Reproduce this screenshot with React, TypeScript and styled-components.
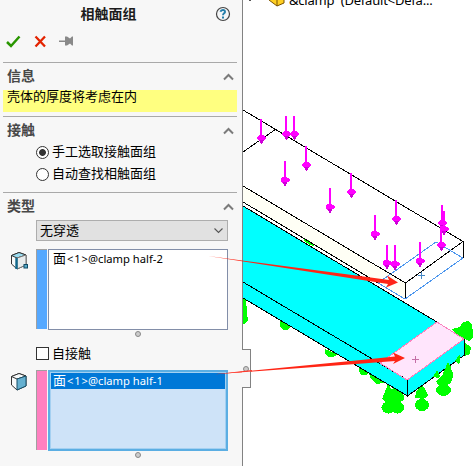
import React from 'react';
import styled, { createGlobalStyle, css } from 'styled-components';

const Global = createGlobalStyle`
  * { box-sizing: border-box; }
  body { margin: 0; background: #fff; overflow: hidden; font: 13px/18px "Noto Sans CJK SC", sans-serif; color: #000; }
`;

const Workspace = styled.div`
  display: flex;
  width: 476px;
  height: 466px;
  position: relative;
  overflow: hidden;
`;
const Panel = styled.aside`
  width: 243px;
  flex: none;
  background: #f7f7f7;
  border-right: 1px solid #828282;
  display: flex;
  flex-direction: column;
`;
const TitleBar = styled.header`
  height: 28px;
  display: grid;
  grid-template-columns: 204px 38px;
  align-items: center;
  justify-items: center;
`;
const Title = styled.h1`
  margin: -2px 0 0 13px;
  font-size: 14px;
  line-height: 20px;
  font-weight: 700;
  color: #1c1c1c;
`;
const Toolbar = styled.div`
  height: 34px;
  padding: 6px 0 0 5px;
  display: flex;
  gap: 11px;
`;
const Section = styled.section<{ $height: number }>`
  height: ${p => p.$height}px;
  margin: 0 5px 0 3px;
  border-top: 1px solid #a9a9a9;
`;
const SectionHead = styled.div`
  height: 27px;
  padding: 0 3px 0 4px;
  display: flex;
  align-items: center;
  justify-content: space-between;
`;
const SectionTitle = styled.h2`
  margin: -4px 0 0;
  font-size: 14px;
  line-height: 20px;
  font-weight: 700;
  color: #484848;
`;
const Message = styled.p`
  margin: 0;
  height: 22px;
  padding: 0 4px;
  line-height: 12px;
  background: #ffff80;
`;
const Choices = styled.div`
  padding-left: 33px;
  margin-top: -3px;
`;
const Choice = styled.label`
  height: 22px;
  display: flex;
  align-items: center;
  gap: 3px;
  line-height: 14px;
`;
const ChoiceText = styled.span`
  margin-top: -2px;
`;
const Radio = styled.span<{ $on?: boolean }>`
  width: 13px;
  height: 13px;
  border: 1px solid #333;
  border-radius: 50%;
  background: ${p => (p.$on ? 'radial-gradient(circle, #333 3px, #fff 3.8px)' : '#fff')};
`;
const Checkbox = styled.span`
  width: 13px;
  height: 13px;
  border: 1px solid #333;
  background: #fff;
`;
const Select = styled.div`
  width: 192px;
  height: 21px;
  margin: 0 0 8px 33px;
  padding: 0 3px 2px 3px;
  border: 1px solid #adadad;
  background: #e1e1e1;
  display: flex;
  align-items: center;
  justify-content: space-between;
`;
const Picker = styled.div`
  display: grid;
  grid-template-columns: 33px 11px 181px;
  height: 82px;
`;
const PickerIcon = styled.div`
  padding: 2px 0 0 7px;
`;
const ColorBar = styled.div<{ $color: string }>`
  height: 80px;
  border-left: 1px solid #a0a0a0;
  border-top: 1px solid #a0a0a0;
  background: ${p => p.$color};
`;
const List = styled.div<{ $active?: boolean }>`
  margin-left: 1px;
  height: 81px;
  font-family: "Noto Sans", "Noto Sans CJK SC", sans-serif;
  font-size: 11.2px;
  border: 1px solid #828ea8;
  background: #fff;
  padding: 1px 2px;
  ${p => p.$active && css`
    border: 2px solid #5baee3;
    padding: 1px;
    background: #cee3f8;
    box-shadow: inset 0 0 0 1px #a4d0f1;
  `}
`;
const Item = styled.div<{ $selected?: boolean }>`
  height: 16px;
  padding-left: 2px;
  display: flex;
  line-height: 15px;
  white-space: nowrap;
  color: ${p => (p.$selected ? '#fff' : '#000')};
  background: ${p => (p.$selected ? '#0078d7' : 'transparent')};
`;
const Face = styled.span`
  font-family: "Noto Sans CJK SC", sans-serif;
  font-size: 13px;
  line-height: 14px;
`;
const FaceIndex = styled.span`
  width: 22px;
  padding-left: 1px;
  letter-spacing: 0.9px;
`;
const Grip = styled.div`
  width: 6px;
  height: 6px;
  margin-left: 132px;
  border: 1px solid #888;
  border-radius: 50%;
  background: #ccc;
`;
const SelfContact = styled.div`
  padding-left: 33px;
  height: 23px;
  margin: 5px 0;
  display: flex;
  align-items: center;
  gap: 3px;
  line-height: 14px;
`;
const Viewport = styled.main`
  flex: 1;
  overflow: hidden;
  background: #fff;
`;
const TreeLabel = styled.div`
  height: 9px;
  padding-left: 26px;
  display: flex;
  gap: 4px;
  font: 13px/14px "Noto Sans", sans-serif;
  white-space: pre;
`;
const TreeText = styled.span`
  margin-top: -7px;
  letter-spacing: -0.2px;
`;
const SplitTab = styled.div`
  position: absolute;
  left: 242px;
  top: 349px;
  width: 9px;
  height: 39px;
  background: #f7f7f7;
  border: 1px solid #828282;
  border-left: 0;
  display: flex;
  align-items: center;
`;
const TabGrip = styled.span`
  width: 6px;
  height: 6px;
  margin-left: 1px;
  border: 1px solid #888;
  border-radius: 50%;
  background: #ccc;
`;
const Overlay = styled.svg`
  position: absolute;
  inset: 0;
  pointer-events: none;
`;

const Chevron = ({ down }: { down?: boolean }) => (
  <svg width="11" height="8" viewBox="0 0 11 8">
    <path d={down ? 'M1.5 2.5l4 4 4-4' : 'M1 6.5l4.5-4.5L10 6.5'} fill="none" stroke={down ? '#555' : '#7b7b7b'} strokeWidth={down ? 1.1 : 2} />
  </svg>
);

const CubeIcon = ({ front }: { front?: boolean }) => (
  <svg width="19" height="20" viewBox="0 0 19 20">
    <path d="M1.5 4.5L9 1.5L16 4V14L7 18L1.5 13Z" fill="#f7fafb" stroke="#333" />
    <path d="M1.5 4.5L9 1.5L16 4L7 7Z" fill={front ? '#f7fafb' : '#9bdcf0'} stroke="#333" />
    <path d="M7 7L16 4V14L7 18Z" fill={front ? '#65b0d0' : '#e8eced'} stroke={front ? '#174f68' : '#777'} />
    {!front && <>
      <path d="M6.5 7V18" stroke="#10678b" strokeWidth="2.4" />
      <rect x="14" y="13.5" width="3.5" height="3.5" fill="#58aac9" stroke="#104c67" />
    </>}
  </svg>
);

const loads: [number, number, number][] = [
  [261, 119, 144], [286, 116, 140], [294, 116, 140], [306, 146, 171], [284.5, 161, 186],
  [351, 173, 198], [329.5, 188, 213], [396, 200, 225], [374.5, 215, 240], [442, 205, 229],
  [443.5, 211, 235], [441, 226, 251], [386.5, 245, 269], [394.5, 245, 270], [419.5, 242, 267],
];

const Load = ({ x, top, tip }: { x: number; top: number; tip: number }) => (
  <g fill="#f0f">
    <rect x={x - 1} y={top} width="2" height={tip - top - 5} />
    <path d={`M${x - 4} ${tip - 7}l2-2h4l3 2v2l-3 2h-4l-2-2z`} />
    <path d={`M${x - 2} ${tip - 4}h5l-2 4h-1z`} fill="#cf00d8" />
  </g>
);

const Scene = () => (
  <Overlay width="476" height="466" viewBox="0 0 476 466" shapeRendering="crispEdges">
    <path d="M249 0h2v1h-2z" fill="#555" />
    <g fill="#0f0">
      <path d="M243 298h4l-1 5 1 5v6l1 6-2 3-3 1zM280 321h14l-2 5-5 4h-4l-3-4zM325 349l12 5-1 2-5 1h-3l-3-4z" />
      <path d="M359 367l4-4 6 6v4l-3 2h-5l-2-4zM369 373l15 7v3l-8 1-5-5z" />
      <path d="M388 384l4 6 3-4 5 5 4 5v4l-4 2h-15l-3-3z" />
      <path d="M386 398h13v9h-13z" />
      <ellipse cx="388.5" cy="407.5" rx="7" ry="6" />
      <ellipse cx="397.5" cy="407.5" rx="6.5" ry="6" />
      <path d="M422 384l3 5 3 6-3 3h-10l1-6z" />
      <path d="M420 397h4v5h-4z" />
      <ellipse cx="422" cy="405" rx="7" ry="6" />
      <path d="M447 362l3 5 3 6v4l-2 6-6 3h-6l-3-5 6-5z" />
      <ellipse cx="443.5" cy="390" rx="7.5" ry="6" />
      <path d="M452 329l8-2 3-5 5-1 4 4 1 8v4l-4 4-13-7zM464 342l7 5-1 7-6 2z" />
    </g>
    <path d="M243 206L437 322L465 339V355L407 396L243 298Z" fill="#0ff" />
    <path d="M243 186L405 283V299L243 202Z" fill="#fffff5" />
    <path d="M437 322L464 339L407 380L380 363Z" fill="#ffe5fc" />
    <path d="M304 239l4 1 6 6-4-1-6-4z" fill="#0f0" />
    <g fill="none" stroke="#000">
      <path d="M243 110L463 241.5V258M243 152L276 129M243 186L405.5 283L463 241.5M405.5 283V299M243 202L405 299" />
      <path d="M243 206L437 322M243 282L407.5 380V396M243 298L407.5 396L464.5 355V339" />
    </g>
    <path d="M378 283L436 242L463 258L405 299Z" fill="none" stroke="#4c96ee" />
    <path d="M380 363L437 322L464 339L407 380Z" fill="none" stroke="#fa82be" />
    <path d="M433 377l4-7 3 6-2 2zM445 369l3-7 3 5-3 5zM455 361l5-7v8l-2 2z" fill="#0f0" />
    {loads.map(([x, top, tip], i) => <Load key={i} x={x} top={top} tip={tip} />)}
    <path d="M421.5 272v7M418 275.5h7" stroke="#4688c5" />
    <path d="M415.5 356v7M412 359.5h7" stroke="#c46fa6" />
    <g fill="#ff2515" shapeRendering="geometricPrecision">
      <path d="M208 256L356 275.5L389 280L387 275.5L398 282.5L386 287.5L388 284L356 279Z" />
      <path d="M215 374.2L356 360.5L395 356.5L393 352.5L405 358L393 364L395 361L356 364Z" />
    </g>
  </Overlay>
);

export default function App() {
  return (
    <>
      <Global />
      <Workspace>
        <Panel>
          <TitleBar>
            <Title>相触面组</Title>
            <svg width="16" height="16" viewBox="0 0 16 16">
              <circle cx="8" cy="8" r="6.5" fill="#f4f6f7" stroke="#444" strokeWidth="1.2" />
              <path d="M5.5 5.8C6 3.4 10.3 3.5 10 6C9.8 7.3 8 7.3 8 9.2" fill="none" stroke="#247eaa" strokeWidth="1.9" />
              <path d="M7 10.5h2v2H7z" fill="#247eaa" />
            </svg>
          </TitleBar>
          <Toolbar>
            <svg width="17" height="15" viewBox="0 0 17 15"><path d="M2 8l4 4L14.5 2.5" fill="none" stroke="#299600" strokeWidth="2.5" /></svg>
            <svg width="15" height="15" viewBox="0 0 15 15"><path d="M2.5 2.5l9.5 10M12 2.5l-9.5 10" stroke="#e32300" strokeWidth="2.3" /></svg>
            <svg width="16" height="15" viewBox="0 0 16 15"><path d="M0 6.5h6V2.5h2l3 2 2-2h1v9h-1l-2-2-3 2H6V8H0z" fill="#898989" /></svg>
          </Toolbar>
          <Section $height={54}>
            <SectionHead><SectionTitle>信息</SectionTitle><Chevron /></SectionHead>
            <Message>壳体的厚度将考虑在内</Message>
          </Section>
          <Section $height={76}>
            <SectionHead><SectionTitle>接触</SectionTitle><Chevron /></SectionHead>
            <Choices>
              <Choice><Radio $on /><ChoiceText>手工选取接触面组</ChoiceText></Choice>
              <Choice><Radio /><ChoiceText>自动查找相触面组</ChoiceText></Choice>
            </Choices>
          </Section>
          <Section $height={274}>
            <SectionHead><SectionTitle>类型</SectionTitle><Chevron /></SectionHead>
            <Select>无穿透<Chevron down /></Select>
            <Picker>
              <PickerIcon><CubeIcon /></PickerIcon>
              <ColorBar $color="#55a8ff" />
              <List><Item><Face>面</Face><FaceIndex>&lt;1&gt;</FaceIndex>@clamp half-2</Item></List>
            </Picker>
            <Grip />
            <SelfContact><Checkbox /><ChoiceText>自接触</ChoiceText></SelfContact>
            <Picker>
              <PickerIcon><CubeIcon front /></PickerIcon>
              <ColorBar $color="#ff80c0" />
              <List $active><Item $selected><Face>面</Face><FaceIndex>&lt;1&gt;</FaceIndex>@clamp half-1</Item></List>
            </Picker>
            <Grip />
          </Section>
        </Panel>
        <Viewport>
          <TreeLabel>
            <svg width="16" height="8" viewBox="0 0 16 8"><path d="M0 0L8 6L15 3V0" fill="#ffcf22" stroke="#7a5200" /><path d="M8 0v6" stroke="#7a5200" /></svg>
            <TreeText>&amp;clamp  (Default&lt;Defa...</TreeText>
          </TreeLabel>
        </Viewport>
        <Scene />
        <SplitTab><TabGrip /></SplitTab>
        <Overlay width="476" height="466">
          <path d="M215 374.2L252 369.9V371.5Z" fill="#ff3a2d" />
        </Overlay>
      </Workspace>
    </>
  );
}
